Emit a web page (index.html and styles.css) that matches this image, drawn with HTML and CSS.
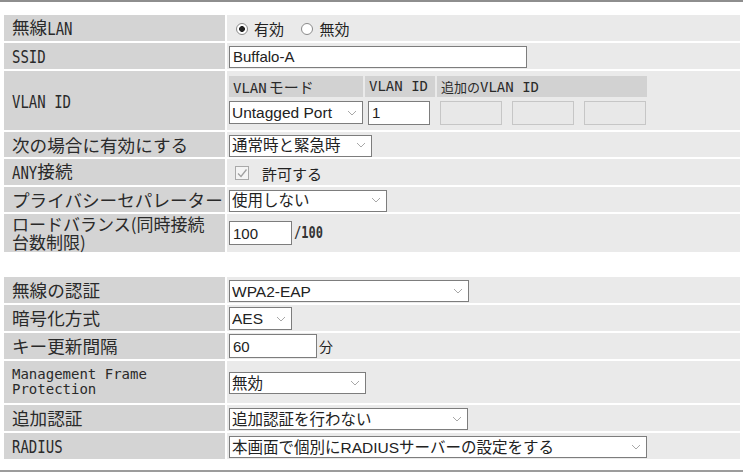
FILE: index.html
```html
<!DOCTYPE html>
<html lang="ja">
<head>
<meta charset="utf-8">
<title>無線設定</title>
<link rel="stylesheet" href="styles.css">
</head>
<body>
<div class="page">
  <table class="form">
    <tr class="h26">
      <th>無線<span class="m">LAN</span></th>
      <td>
        <label class="radio"><input type="radio" name="wl" checked><span>有効</span></label>
        <label class="radio"><input type="radio" name="wl"><span>無効</span></label>
      </td>
    </tr>
    <tr class="h26">
      <th><span class="m">SSID</span></th>
      <td><input class="txt w-ssid" type="text" value="Buffalo-A"></td>
    </tr>
    <tr class="h59">
      <th><span class="m">VLAN ID</span></th>
      <td>
        <div class="vlan">
          <div class="vh">VLAN<span class="j">モード</span></div>
          <div class="vh">VLAN ID</div>
          <div class="vh span3"><span class="j">追加の</span>VLAN ID</div>
          <div class="vc"><span class="sel w-untag"><select><option>Untagged Port</option></select><svg width="10" height="6" viewBox="0 0 10 6"><path d="M1 1L5 5L9 1" fill="none" stroke="#a8a8a8" stroke-width="1"/></svg></span></div>
          <div class="vc"><input class="txt vin" type="text" value="1"></div>
          <div class="vc"><input class="txt vin" type="text" disabled></div>
          <div class="vc"><input class="txt vin" type="text" disabled></div>
          <div class="vc"><input class="txt vin" type="text" disabled></div>
        </div>
      </td>
    </tr>
    <tr class="h25">
      <th>次の場合に有効にする</th>
      <td><span class="sel w-mode"><select><option>通常時と緊急時</option></select><svg width="10" height="6" viewBox="0 0 10 6"><path d="M1 1L5 5L9 1" fill="none" stroke="#a8a8a8" stroke-width="1"/></svg></span></td>
    </tr>
    <tr class="h26">
      <th><span class="m">ANY</span>接続</th>
      <td>
        <label class="check"><span class="box"><svg width="12" height="12" viewBox="0 0 12 12"><path d="M2 6.5L5 9.5L10.5 2.5" fill="none" stroke="#a0a0a0" stroke-width="1.3"/></svg></span><span>許可する</span></label>
      </td>
    </tr>
    <tr class="h25">
      <th>プライバシーセパレーター</th>
      <td><span class="sel w-priv"><select><option>使用しない</option></select><svg width="10" height="6" viewBox="0 0 10 6"><path d="M1 1L5 5L9 1" fill="none" stroke="#a8a8a8" stroke-width="1"/></svg></span></td>
    </tr>
    <tr class="h38">
      <th class="two"><span class="ln">ロードバランス(同時接続</span><span class="ln">台数制限)</span></th>
      <td><input class="txt w-100" type="text" value="100"><span class="unit mono">/100</span></td>
    </tr>
  </table>

  <table class="form second">
    <tr class="h26">
      <th>無線の認証</th>
      <td><span class="sel w-auth"><select><option>WPA2-EAP</option></select><svg width="10" height="6" viewBox="0 0 10 6"><path d="M1 1L5 5L9 1" fill="none" stroke="#a8a8a8" stroke-width="1"/></svg></span></td>
    </tr>
    <tr class="h26">
      <th>暗号化方式</th>
      <td><span class="sel w-aes"><select><option>AES</option></select><svg width="10" height="6" viewBox="0 0 10 6"><path d="M1 1L5 5L9 1" fill="none" stroke="#a8a8a8" stroke-width="1"/></svg></span></td>
    </tr>
    <tr class="h26">
      <th>キー更新間隔</th>
      <td><input class="txt w-60" type="text" value="60"><span class="unit">分</span></td>
    </tr>
    <tr class="h42">
      <th><span class="mfp">Management Frame Protection</span></th>
      <td><span class="sel w-mfp"><select><option>無効</option></select><svg width="10" height="6" viewBox="0 0 10 6"><path d="M1 1L5 5L9 1" fill="none" stroke="#a8a8a8" stroke-width="1"/></svg></span></td>
    </tr>
    <tr class="h26">
      <th>追加認証</th>
      <td><span class="sel w-add"><select><option>追加認証を行わない</option></select><svg width="10" height="6" viewBox="0 0 10 6"><path d="M1 1L5 5L9 1" fill="none" stroke="#a8a8a8" stroke-width="1"/></svg></span></td>
    </tr>
    <tr class="h26">
      <th><span class="m">RADIUS</span></th>
      <td><span class="sel w-rad"><select><option>本画面で個別にRADIUSサーバーの設定をする</option></select><svg width="10" height="6" viewBox="0 0 10 6"><path d="M1 1L5 5L9 1" fill="none" stroke="#a8a8a8" stroke-width="1"/></svg></span></td>
    </tr>
  </table>
</div>
</body>
</html>
```

FILE: styles.css
```css
* {
  box-sizing: border-box;
}

body {
  margin: 0;
  background: #ffffff;
  color: #222222;
  font-family: "Noto Sans CJK JP", sans-serif;
}

.page {
  width: 743px;
  height: 472px;
  border-top: 2px solid #8e8e8e;
  border-bottom: 2px solid #9c9c9c;
  padding-top: 11px;
}

.form {
  border-collapse: separate;
  border-spacing: 2px;
  margin-left: 2px;
  width: 740px;
  table-layout: fixed;
}

.form.second {
  margin-top: 21px;
}

.form th {
  width: 221px;
  background: #d4d4d4;
  text-align: left;
  font-weight: normal;
  font-size: 17.6px;
  line-height: 18px;
  color: #2a2a2a;
  padding: 0 0 0 8px;
  vertical-align: middle;
  white-space: nowrap;
}

.ln {
  display: block;
  line-height: 18px;
  font-size: 17px;
}

.form td {
  background: #eaeaea;
  padding: 0 0 0 2px;
  vertical-align: middle;
  font-size: 15px;
  white-space: nowrap;
}

.h25 th, .h25 td { height: 25px; }
.h26 th, .h26 td { height: 26px; }
.h38 th, .h38 td { height: 38px; }
.h42 th, .h42 td { height: 42px; }
.h59 th, .h59 td { height: 59px; }

.m {
  display: inline-block;
  font-family: "DejaVu Sans Mono", "Liberation Mono", monospace;
  font-size: 14px;
  transform: scaleY(1.3);
  transform-origin: 50% 60%;
  color: #2a2a2a;
}

.mfp {
  display: block;
  font-family: "DejaVu Sans Mono", "Liberation Mono", monospace;
  font-size: 14px;
  white-space: normal;
  line-height: 15px;
  padding-right: 4px;
}

/* radio */
.radio {
  display: inline-flex;
  align-items: center;
  margin-left: 7px;
  margin-right: 7px;
  vertical-align: middle;
}

.radio input {
  appearance: none;
  -webkit-appearance: none;
  width: 12px;
  height: 12px;
  margin: 0 6px 0 0;
  border: 1px solid #8a8a8a;
  border-radius: 50%;
  background: #ffffff;
}

.radio input:checked {
  background: radial-gradient(circle, #222 0 2.6px, #ffffff 3.2px);
}

.radio span {
  font-size: 15px;
  line-height: 20px;
}

/* checkbox */
.check {
  display: inline-flex;
  align-items: center;
  margin-left: 6px;
  vertical-align: middle;
}

.check .box {
  width: 14px;
  height: 14px;
  border: 1px solid #a9a9a9;
  background: #f4f4f4;
  display: inline-flex;
  align-items: center;
  justify-content: center;
  margin-right: 13px;
}

.check span:last-child {
  font-size: 15px;
}

/* text inputs */
.txt {
  height: 24px;
  border: 1px solid #7d7d7d;
  background: #ffffff;
  font: 15px "Liberation Sans", "Noto Sans CJK JP", sans-serif;
  color: #222;
  padding: 0 3px;
  margin: 0;
  vertical-align: middle;
  border-radius: 0;
}

.txt:disabled {
  background: #e8e8e8;
  border-color: #c6c6c6;
}

.w-ssid { width: 298px; height: 22px; }
.w-100 { width: 63px; }
.w-60 { width: 88px; }

.unit {
  margin-left: 2px;
  vertical-align: middle;
  font-size: 14px;
}

.unit.mono {
  display: inline-block;
  font-family: "DejaVu Sans Mono", "Liberation Mono", monospace;
  font-size: 12px;
  font-weight: bold;
  color: #333;
  transform: scaleY(1.3);
}

/* selects */
.sel {
  position: relative;
  display: inline-block;
  vertical-align: middle;
}

.sel select {
  appearance: none;
  -webkit-appearance: none;
  width: 100%;
  height: 22px;
  border: 1px solid #7d7d7d;
  border-radius: 0;
  background: #ffffff;
  font: 15.5px "Liberation Sans", "Noto Sans CJK JP", sans-serif;
  color: #222;
  padding: 0 18px 0 2px;
  margin: 0;
}

.sel svg {
  position: absolute;
  right: 6px;
  top: 50%;
  margin-top: -3px;
  pointer-events: none;
}

.w-untag { width: 134px; }
.w-untag select { height: 23px; }
.w-mode { width: 143px; }
.w-priv { width: 158px; }
.w-auth { width: 240px; }
.w-aes { width: 63px; }
.w-aes select { height: 23px; }
.w-mfp { width: 137px; }
.w-add { width: 239px; }
.w-rad { width: 418px; }

/* nested VLAN grid */
.vlan {
  display: grid;
  grid-template-columns: 134px 70px 70px 70px 66px;
  column-gap: 2px;
  row-gap: 3px;
}

.vh {
  background: #d2d2d2;
  height: 21px;
  font-family: "DejaVu Sans Mono", "Liberation Mono", monospace;
  font-size: 14px;
  line-height: 21px;
  padding-left: 4px;
  color: #2a2a2a;
  white-space: nowrap;
}

.vh .j {
  font-family: "Noto Sans CJK JP", sans-serif;
  font-size: 15px;
  margin-left: 2px;
}

.vh.span3 {
  grid-column: span 3;
}

.vh.span3 .j {
  margin-left: 0;
  font-size: 13px;
}

.vc {
  height: 25px;
  display: flex;
  align-items: center;
}

.vin {
  width: 62px;
  margin-left: 3px;
}
```
